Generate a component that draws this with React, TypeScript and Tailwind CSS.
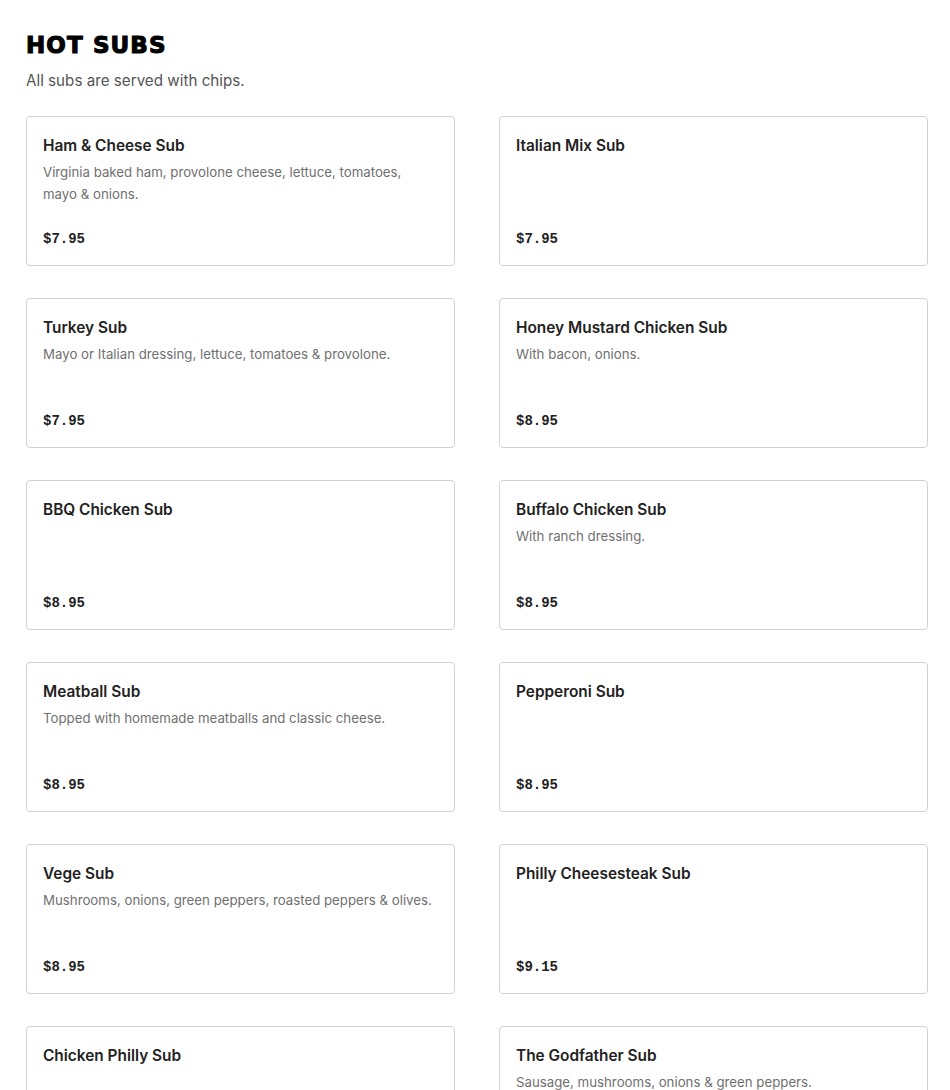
import React from "react";

const items: { name: string; desc?: string; price: string }[] = [
  { name: "Ham & Cheese Sub", desc: "Virginia baked ham, provolone cheese, lettuce, tomatoes, mayo & onions.", price: "$7.95" },
  { name: "Italian Mix Sub", price: "$7.95" },
  { name: "Turkey Sub", desc: "Mayo or Italian dressing, lettuce, tomatoes & provolone.", price: "$7.95" },
  { name: "Honey Mustard Chicken Sub", desc: "With bacon, onions.", price: "$8.95" },
  { name: "BBQ Chicken Sub", price: "$8.95" },
  { name: "Buffalo Chicken Sub", desc: "With ranch dressing.", price: "$8.95" },
  { name: "Meatball Sub", desc: "Topped with homemade meatballs and classic cheese.", price: "$8.95" },
  { name: "Pepperoni Sub", price: "$8.95" },
  { name: "Vege Sub", desc: "Mushrooms, onions, green peppers, roasted peppers & olives.", price: "$8.95" },
  { name: "Philly Cheesesteak Sub", price: "$9.15" },
  { name: "Chicken Philly Sub", price: "$9.15" },
  { name: "The Godfather Sub", desc: "Sausage, mushrooms, onions & green peppers.", price: "$9.95" },
];

export default function App() {
  return (
    <div className="bg-white pl-[26px] pr-[22px] pt-[31px] pb-10 font-['Inter',sans-serif] text-[#1a1a1a]">
      <h1 className="text-[23px] leading-[28px] font-bold tracking-[1.1px] text-black font-['DejaVu_Sans',sans-serif] [-webkit-text-stroke:1.1px_black]">
        HOT SUBS
      </h1>
      <p className="mt-[10px] text-[15.2px] leading-[24px] text-[#555555]">All subs are served with chips.</p>
      <div className="mt-[23px] grid grid-cols-[429px_429px] gap-x-[44px] gap-y-[32px]">
        {items.map((it) => (
          <div
            key={it.name}
            className="flex h-[150px] flex-col justify-between rounded-[4px] border border-[#d2d2d2] px-4 pt-[17px] pb-4"
          >
            <div>
              <div className="text-[15.4px] leading-[24px] font-semibold text-[#222]">{it.name}</div>
              {it.desc && (
                <div className="mt-[3px] text-[13.25px] leading-[22px] text-[#707070]">{it.desc}</div>
              )}
            </div>
            <div className="font-['Liberation_Mono',monospace] text-[14px] leading-[20px] font-bold text-[#222]">
              {it.price}
            </div>
          </div>
        ))}
      </div>
    </div>
  );
}
